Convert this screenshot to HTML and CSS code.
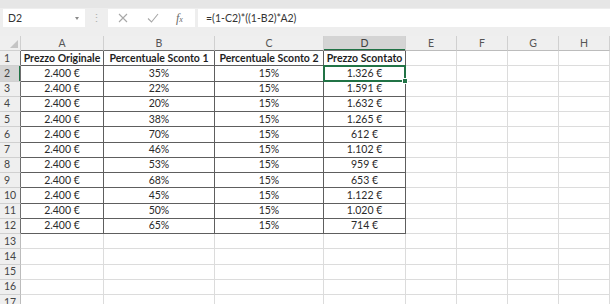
FILE: index.html
```html
<!DOCTYPE html>
<html lang="it">
<head>
<meta charset="utf-8">
<link rel="stylesheet" href="styles.css">
</head>
<body>
<div class="ribbon-edge"></div>
<div class="fbar">
  <div class="namebox"><span>D2</span><span class="caret"></span></div>
  <div class="grip">⋮</div>
  <div class="fxbox">
    <svg class="ic" width="10" height="10" viewBox="0 0 10 10"><path d="M1 1L9 9M9 1L1 9" stroke="#a8a8a8" stroke-width="1.1" fill="none"/></svg>
    <svg class="ic" width="12" height="10" viewBox="0 0 12 10"><path d="M1 5.5L4.5 9L11 1" stroke="#a8a8a8" stroke-width="1.1" fill="none"/></svg>
    <span class="fx">f<span class="fxx">x</span></span>
  </div>
  <div class="formula">=(1-C2)*((1-B2)*A2)</div>
</div>
<table class="grid">
  <colgroup>
    <col class="w-rh"><col class="w-a"><col class="w-b"><col class="w-c"><col class="w-d"><col class="w-e"><col class="w-e"><col class="w-e"><col class="w-e">
  </colgroup>
  <tr class="hdr">
    <th class="corner"><span class="tri"></span></th>
    <th class="ch edge">A</th><th class="ch edge">B</th><th class="ch edge">C</th><th class="ch edge selcol">D</th>
    <th class="ch">E</th><th class="ch">F</th><th class="ch">G</th><th class="ch">H</th>
  </tr>
  <tr>
    <th class="rh edge">1</th>
    <td class="t b">Prezzo Originale</td><td class="t b">Percentuale Sconto 1</td><td class="t b">Percentuale Sconto 2</td><td class="t b">Prezzo Scontato</td>
    <td></td><td></td><td></td><td></td>
  </tr>
  <tr>
    <th class="rh edge selrow">2</th>
    <td class="t">2.400 €</td><td class="t">35%</td><td class="t">15%</td><td class="t sel">1.326 €</td>
    <td></td><td></td><td></td><td></td>
  </tr>
  <tr>
    <th class="rh edge">3</th>
    <td class="t">2.400 €</td><td class="t">22%</td><td class="t">15%</td><td class="t">1.591 €</td>
    <td></td><td></td><td></td><td></td>
  </tr>
  <tr>
    <th class="rh edge">4</th>
    <td class="t">2.400 €</td><td class="t">20%</td><td class="t">15%</td><td class="t">1.632 €</td>
    <td></td><td></td><td></td><td></td>
  </tr>
  <tr>
    <th class="rh edge">5</th>
    <td class="t">2.400 €</td><td class="t">38%</td><td class="t">15%</td><td class="t">1.265 €</td>
    <td></td><td></td><td></td><td></td>
  </tr>
  <tr>
    <th class="rh edge">6</th>
    <td class="t">2.400 €</td><td class="t">70%</td><td class="t">15%</td><td class="t">612 €</td>
    <td></td><td></td><td></td><td></td>
  </tr>
  <tr>
    <th class="rh edge">7</th>
    <td class="t">2.400 €</td><td class="t">46%</td><td class="t">15%</td><td class="t">1.102 €</td>
    <td></td><td></td><td></td><td></td>
  </tr>
  <tr>
    <th class="rh edge">8</th>
    <td class="t">2.400 €</td><td class="t">53%</td><td class="t">15%</td><td class="t">959 €</td>
    <td></td><td></td><td></td><td></td>
  </tr>
  <tr>
    <th class="rh edge">9</th>
    <td class="t">2.400 €</td><td class="t">68%</td><td class="t">15%</td><td class="t">653 €</td>
    <td></td><td></td><td></td><td></td>
  </tr>
  <tr>
    <th class="rh edge">10</th>
    <td class="t">2.400 €</td><td class="t">45%</td><td class="t">15%</td><td class="t">1.122 €</td>
    <td></td><td></td><td></td><td></td>
  </tr>
  <tr>
    <th class="rh edge">11</th>
    <td class="t">2.400 €</td><td class="t">50%</td><td class="t">15%</td><td class="t">1.020 €</td>
    <td></td><td></td><td></td><td></td>
  </tr>
  <tr>
    <th class="rh edge">12</th>
    <td class="t">2.400 €</td><td class="t">65%</td><td class="t">15%</td><td class="t">714 €</td>
    <td></td><td></td><td></td><td></td>
  </tr>
  <tr><th class="rh">13</th><td></td><td></td><td></td><td></td><td></td><td></td><td></td><td></td></tr>
  <tr><th class="rh">14</th><td></td><td></td><td></td><td></td><td></td><td></td><td></td><td></td></tr>
  <tr><th class="rh">15</th><td></td><td></td><td></td><td></td><td></td><td></td><td></td><td></td></tr>
  <tr><th class="rh">16</th><td></td><td></td><td></td><td></td><td></td><td></td><td></td><td></td></tr>
  <tr><th class="rh">17</th><td></td><td></td><td></td><td></td><td></td><td></td><td></td><td></td></tr>
</table>
</body>
</html>
```
FILE: styles.css
```css
html, body {
  margin: 0;
  padding: 0;
}
body {
  width: 610px;
  height: 304px;
  overflow: hidden;
  background: #ffffff;
  font-family: Lato, "Open Sans", sans-serif;
  color: #262626;
}
.ribbon-edge {
  height: 8px;
  background: #e6e6e6;
}
.fbar {
  height: 28px;
  box-sizing: border-box;
  background: #eeeeee;
  display: flex;
  align-items: flex-start;
  padding: 1px 0 0 3px;
}
.namebox {
  width: 82px;
  height: 18px;
  background: #fff;
  display: flex;
  align-items: center;
  justify-content: space-between;
  box-sizing: border-box;
  padding: 0 6px 0 5px;
  font-size: 10.5px;
  color: #333;
}
.caret {
  width: 0;
  height: 0;
  border-left: 2.5px solid transparent;
  border-right: 2.5px solid transparent;
  border-top: 3px solid #8a8a8a;
}
.grip {
  width: 23px;
  text-align: center;
  color: #b0b0b0;
  font-size: 11px;
  line-height: 18px;
}
.fxbox {
  width: 87px;
  height: 18px;
  background: #fff;
  display: flex;
  align-items: center;
  box-sizing: border-box;
  padding: 0 0 0 10px;
  gap: 19px;
}
.fx {
  font-family: "Liberation Serif", serif;
  font-style: italic;
  font-size: 12px;
  color: #6a6a6a;
  margin-left: -2px;
}
.fxx {
  font-size: 8px;
}
.formula {
  flex: 1;
  height: 18px;
  margin-left: 3px;
  background: #fff;
  font-size: 10.5px;
  line-height: 18px;
  padding-left: 8px;
  color: #333;
}

.grid {
  border-collapse: separate;
  border-spacing: 0;
  table-layout: fixed;
  width: 610px;
  font-size: 10.5px;
}
.w-rh { width: 21px; }
.w-a { width: 83px; }
.w-b { width: 111px; }
.w-c { width: 109px; }
.w-d { width: 82px; }
.w-e { width: 51px; }

.grid td, .grid th {
  box-sizing: border-box;
  height: 15.25px;
  padding: 0;
  border-right: 1px solid #dcdcdc;
  border-bottom: 1px solid #dcdcdc;
  text-align: center;
  vertical-align: middle;
  white-space: nowrap;
  overflow: hidden;
  line-height: 13px;
}
.grid .hdr th {
  height: 15px;
}
.grid th {
  font-weight: normal;
  background: #efefef;
  color: #555;
  border-right-color: #d0d0d0;
  border-bottom-color: #d0d0d0;
}
.grid th.ch {
  border-bottom-color: #bcbcbc;
}
.grid th.rh {
  text-align: left;
  padding-left: 4px;
  color: #444;
  border-right-color: #bcbcbc;
}
.corner {
  position: relative;
}
.tri {
  position: absolute;
  right: 2px;
  bottom: 2px;
  width: 0;
  height: 0;
  border-left: 8px solid transparent;
  border-bottom: 8px solid #c4c4c4;
}
.grid th.ch.edge {
  border-bottom-color: #6e6e6e;
}
.grid th.rh.edge {
  border-right-color: #6e6e6e;
}
.grid th.selcol {
  background: #d4d4d4;
  color: #3f3f3f;
  border-bottom: 1px solid #217346;
  box-shadow: inset 0 -1px 0 #217346;
}
.grid th.selrow {
  background: #d4d4d4;
  border-right: 1px solid #217346;
  box-shadow: inset -1px 0 0 #217346;
}
.grid td.t {
  border-right-color: #5e5e5e;
  border-bottom-color: #5e5e5e;
  color: #2a2a2a;
}
.grid td.b {
  font-weight: bold;
  color: #1e1e1e;
}
.grid td.sel {
  position: relative;
  overflow: visible;
}
.grid td.sel::after {
  content: "";
  position: absolute;
  left: -1px;
  top: -1px;
  right: -1px;
  bottom: -1px;
  border: 2px solid #217346;
}
.grid td.sel::before {
  content: "";
  position: absolute;
  right: -3px;
  bottom: -3px;
  width: 4px;
  height: 4px;
  background: #217346;
  border: 1px solid #fff;
  z-index: 1;
}
```
